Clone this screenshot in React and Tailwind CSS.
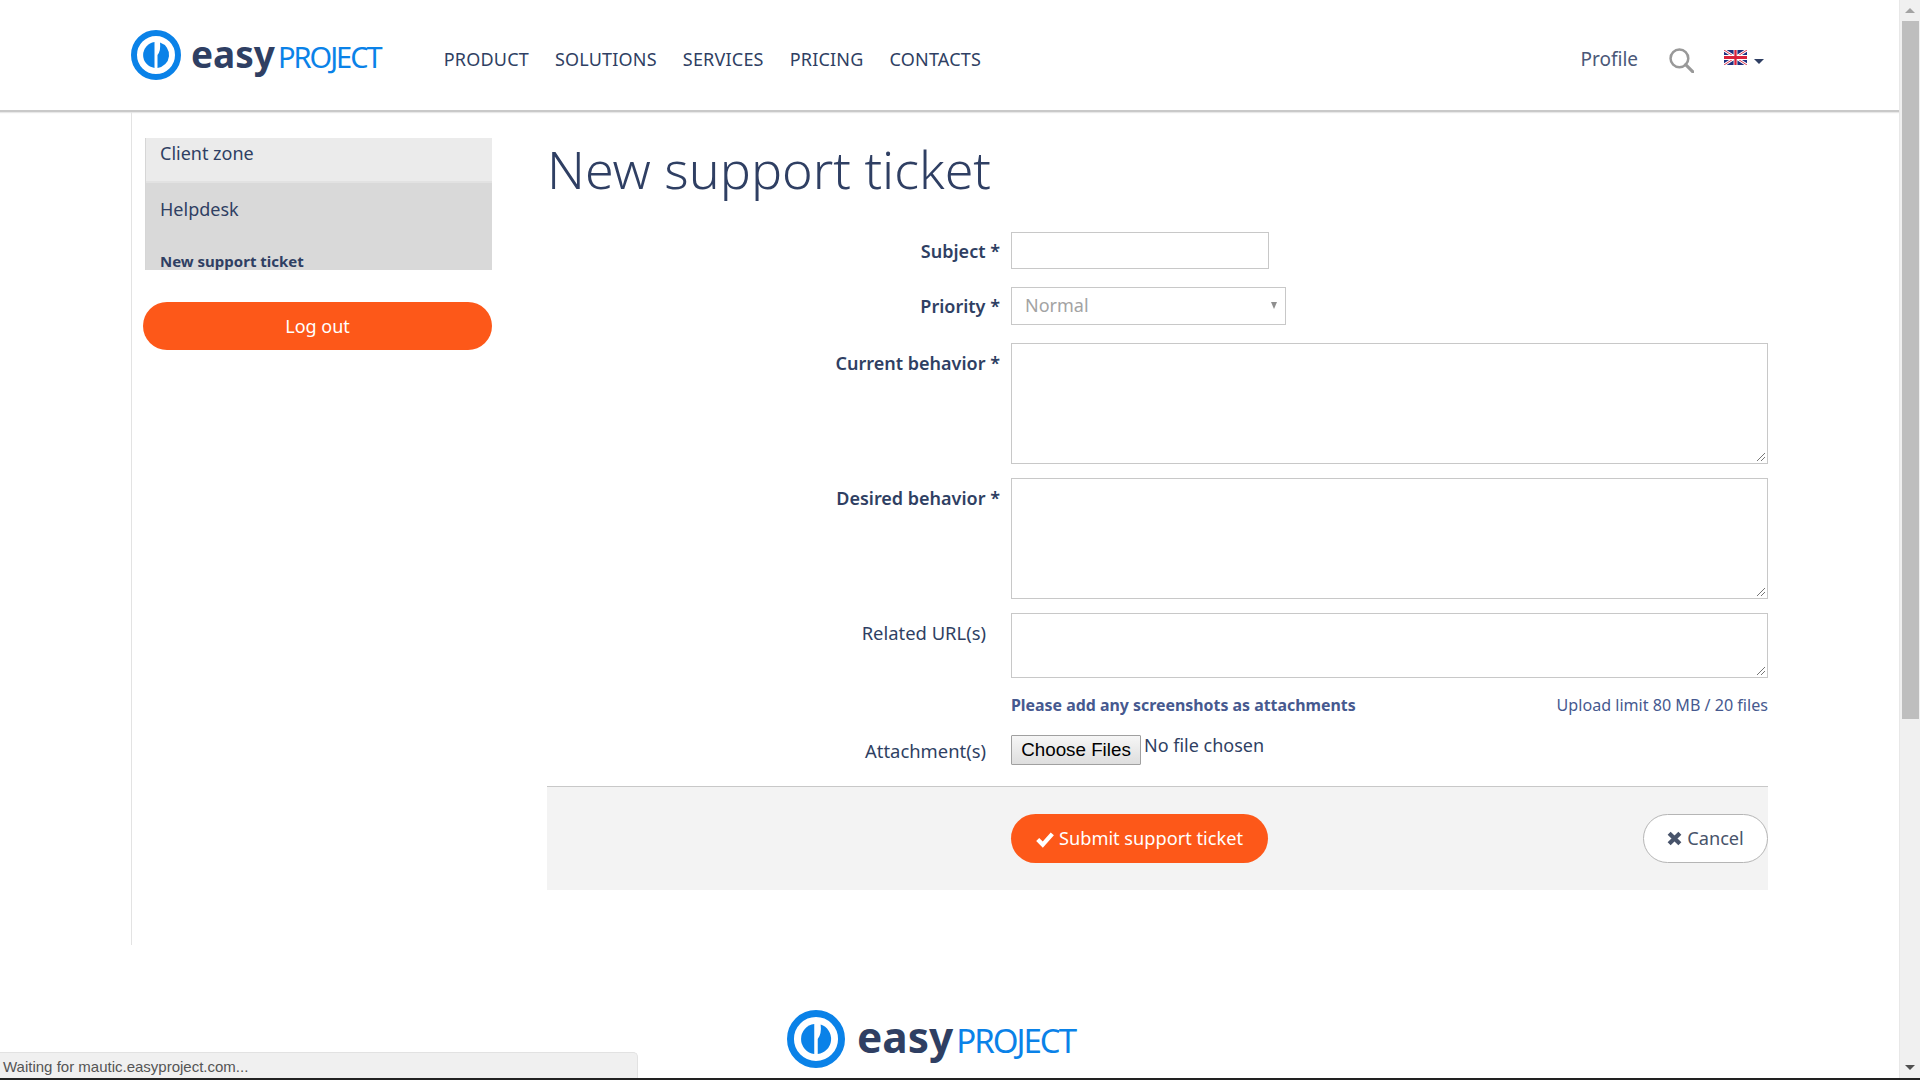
const FONT = "font-['Noto_Sans',sans-serif]"

function LogoMark({ className }) {
  return (
    <svg viewBox="0 0 50 50" className={className}>
      <circle cx="25" cy="25" r="22" fill="none" stroke="#0a82e8" strokeWidth="6" />
      <path d="M23.5 12.1A13 13 0 0 0 23.5 37.9Z" fill="#0a82e8" />
      <path d="M26.5 37.9A13 13 0 0 0 29 12.6Q30 21 26.5 25Z" fill="#0a82e8" />
    </svg>
  )
}

function Logo({ mark, easy, project, gap }) {
  return (
    <div className={`flex items-center ${gap}`}>
      <LogoMark className={mark} />
      <div className="flex items-baseline gap-[3px]">
        <span className={`font-bold text-[#2f3f63] ${easy}`}>easy</span>
        <span className={`font-normal tracking-[-2px] text-[#0a82e8] ${project}`}>PROJECT</span>
      </div>
    </div>
  )
}

function Flag() {
  return (
    <svg viewBox="0 0 60 30" preserveAspectRatio="none" className="w-[23px] h-[15px]">
      <rect width="60" height="30" fill="#1d2f7f" />
      <path d="M0 0L60 30M60 0L0 30" stroke="#fff" strokeWidth="6" />
      <path d="M0 0L60 30M60 0L0 30" stroke="#d8203a" strokeWidth="2" />
      <path d="M30 0V30M0 15H60" stroke="#fff" strokeWidth="10" />
      <path d="M30 0V30M0 15H60" stroke="#d8203a" strokeWidth="6" />
    </svg>
  )
}

function Label({ children, required, className = '' }) {
  return (
    <label className={`w-[464px] shrink-0 text-right text-[#2f3f63] leading-[25px] ${required ? 'text-[18px] font-semibold pr-[11px]' : 'text-[18.4px] pr-[25px]'} ${className}`}>
      {children}
      {required && ' *'}
    </label>
  )
}

function TextArea({ height }) {
  return (
    <div className={`relative w-[757px] border border-[#c8c8c8] ${height}`}>
      <svg viewBox="0 0 10 10" className="absolute right-[1px] bottom-[1px] w-[10px] h-[10px]">
        <path d="M1 9L9 1M5 9L9 5" stroke="#777" strokeWidth="1" />
      </svg>
    </div>
  )
}

export default function App() {
  const nav = ['PRODUCT', 'SOLUTIONS', 'SERVICES', 'PRICING', 'CONTACTS']

  return (
    <div className={`relative flex h-screen w-full overflow-hidden bg-white ${FONT}`}>
      <div className="flex-1 min-w-0 flex flex-col">
        <header className="h-[112px] shrink-0 flex items-center border-b-2 border-[#c9c9c9] shadow-[0_1px_1px_#e8e8e8] pl-[131px] pr-[135px]">
          <Logo mark="w-[50px] h-[50px]" easy="text-[37px] leading-[50px]" project="text-[29px] leading-[50px]" gap="gap-[10px]" />
          <nav className="flex gap-[26px] ml-[63px] pt-[8px] text-[18px] tracking-[0.2px] text-[#2f3f63]">
            {nav.map((n) => (
              <a key={n}>{n}</a>
            ))}
          </nav>
          <div className="ml-auto flex items-center pt-[8px]">
            <span className="text-[19px] text-[#4a5878]">Profile</span>
            <svg viewBox="0 0 24 24" className="ml-[31px] mt-[3px] w-[25px] h-[25px]" fill="none" stroke="#999" strokeWidth="2.4">
              <circle cx="10" cy="10" r="8.5" />
              <path d="M16 16L23 23" strokeLinecap="round" strokeWidth="3" />
            </svg>
            <span className="ml-[30px] mb-[4px]"><Flag /></span>
            <span className="ml-[7px] mt-[4px] w-0 h-0 border-x-[5px] border-x-transparent border-t-[5px] border-t-[#2f3f63]" />
          </div>
        </header>

        <div className="flex pl-[131px] shrink-0">
          <aside className="w-[416px] shrink-0 h-[833px] border-l border-[#e3e3e3] pt-[26px] pl-[11px]">
            <div className="w-[347px] ml-[2px] h-[132px] overflow-hidden text-[#2f3f63] border-l border-[#d6d6d6]">
              <div className="h-[45px] bg-[#ebebeb] border-b-2 border-[#e2e2e2] pl-[14px] text-[18px] leading-[30px]">Client zone</div>
              <div className="h-[87px] bg-[#d9d9d9] pl-[14px]">
                <div className="text-[18px] leading-[25px] pt-[14px] h-[56px]">Helpdesk</div>
                <div className="text-[15px] font-bold leading-[20px] pt-[12px]">New support ticket</div>
              </div>
            </div>
            <button className="mt-[32px] w-[349px] h-[48px] rounded-full bg-[#fd5819] text-white text-[18px]">Log out</button>
          </aside>

          <main className="w-[1221px] shrink-0">
            <h1 className="mt-[23px] text-[52px] font-light leading-[68px] text-[#2f3f63]">New support ticket</h1>

            <div className="mt-[29px] flex flex-col">
              <div className="flex items-start">
                <Label required className="pt-[7px]">Subject</Label>
                <div className="w-[258px] h-[37px] border border-[#c8c8c8]" />
              </div>

              <div className="flex items-start mt-[18px]">
                <Label required className="pt-[7px]">Priority</Label>
                <div className="w-[275px] h-[38px] border border-[#c8c8c8] flex items-center justify-between pl-[13px] pr-[8px] pb-[2px] text-[18px] text-[#a3a3a3]">
                  Normal
                  <span className="w-0 h-0 border-x-[3.5px] border-x-transparent border-t-[7px] border-t-[#8f8f8f]" />
                </div>
              </div>

              <div className="flex items-start mt-[18px]">
                <Label required className="pt-[8px]">Current behavior</Label>
                <TextArea height="h-[121px]" />
              </div>

              <div className="flex items-start mt-[14px]">
                <Label required className="pt-[8px]">Desired behavior</Label>
                <TextArea height="h-[121px]" />
              </div>

              <div className="flex items-start mt-[14px]">
                <Label className="pt-[7px]">Related URL(s)</Label>
                <TextArea height="h-[65px]" />
              </div>

              <div className="flex justify-between items-center w-[757px] ml-[464px] mt-[15px] h-[25px] text-[#46598f]">
                <span className="font-bold text-[15.9px]">Please add any screenshots as attachments</span>
                <span className="text-[16.1px]">Upload limit 80 MB / 20 files</span>
              </div>

              <div className="flex items-start mt-[17px]">
                <Label className="pt-[3px]">Attachment(s)</Label>
                <button className="w-[130px] h-[30px] border border-[#a0a0a0] rounded-[1px] bg-gradient-to-b from-[#f6f6f6] to-[#dedede] text-[18.8px] text-black font-['Liberation_Sans',sans-serif]">Choose Files</button>
                <span className="ml-[3px] -mt-[1px] text-[18px] leading-[22px] text-[#2f3f63]">No file chosen</span>
              </div>
            </div>

            <div className="mt-[21px] w-[1221px] h-[104px] bg-[#f3f3f3] border-t border-[#c8c8c8] flex items-center pl-[464px]">
              <button className="w-[257px] h-[49px] rounded-full bg-[#fd5819] text-white text-[18.2px] flex items-center justify-center gap-[5px]">
                <svg viewBox="0 0 16 16" className="w-[18px] h-[18px]" fill="none" stroke="#fff" strokeWidth="3.8">
                  <path d="M1.5 8.5L6 13L14.5 3.5" />
                </svg>
                Submit support ticket
              </button>
              <button className="ml-auto w-[125px] h-[49px] rounded-full bg-white border border-[#b5b5b5] text-[#47536a] text-[18.2px] flex items-center justify-center gap-[5px]">
                <svg viewBox="0 0 14 14" className="w-[15px] h-[15px]" fill="none" stroke="#47536a" strokeWidth="4">
                  <path d="M2 2L12 12M12 2L2 12" />
                </svg>
                Cancel
              </button>
            </div>
          </main>
        </div>

        <div className="flex justify-center mt-[63px] pr-[37px]">
          <Logo mark="w-[58px] h-[58px]" easy="text-[42.4px] leading-[58px]" project="text-[33px] leading-[58px]" gap="gap-[12px]" />
        </div>
      </div>

      {/* browser scrollbar */}
      <div className="w-[21px] shrink-0 h-full bg-[#f0f0f0] flex flex-col items-center border-l border-[#e8e8e8]">
        <div className="h-[21px] flex items-center justify-center">
          <span className="w-0 h-0 border-x-[5px] border-x-transparent border-b-[5px] border-b-[#a3a3a3]" />
        </div>
        <div className="w-[17px] h-[698px] bg-[#bebebe]" />
        <div className="mt-auto h-[21px] mb-[2px] flex items-center justify-center">
          <span className="w-0 h-0 border-x-[5px] border-x-transparent border-t-[5px] border-t-[#505050]" />
        </div>
      </div>

      {/* loading status bubble */}
      <div className="absolute left-0 bottom-[2px] w-[638px] h-[26px] bg-[#f0f0f0] border-t border-r border-[#e2e2e2] rounded-tr-[5px] pl-[3px] text-[15px] leading-[27px] text-[#555] font-['Liberation_Sans',sans-serif]">
        Waiting for mautic.easyproject.com...
      </div>
      <div className="absolute left-0 right-0 bottom-0 h-[2px] bg-[#222]" />
    </div>
  )
}
